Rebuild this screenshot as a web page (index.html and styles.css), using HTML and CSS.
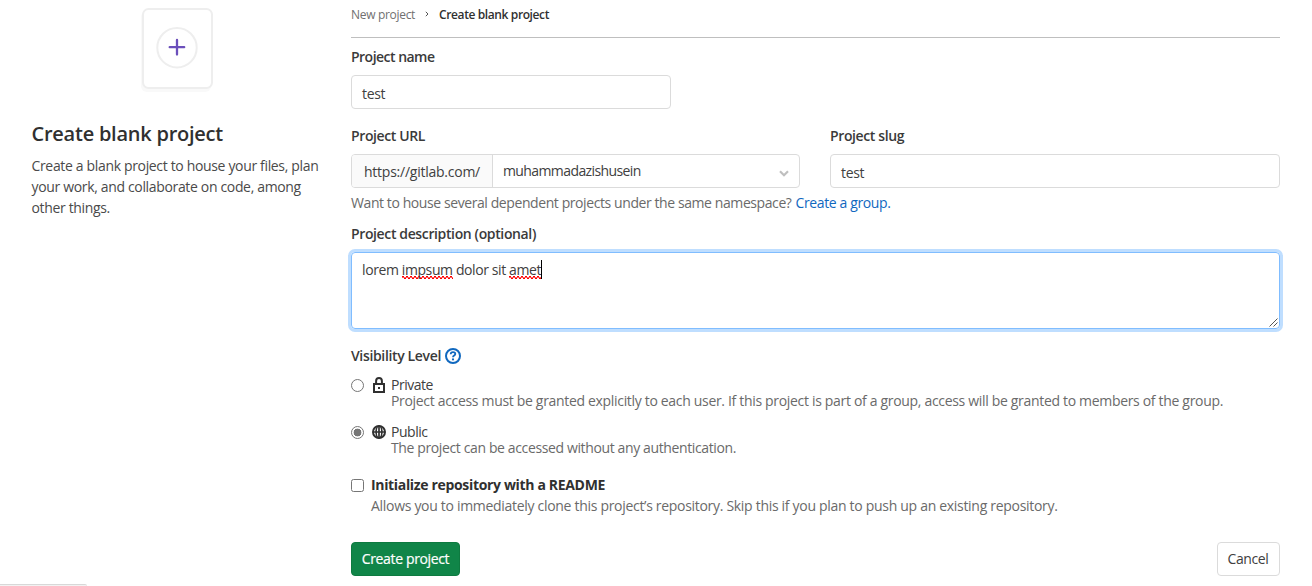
FILE: index.html
```html
<!DOCTYPE html>
<html lang="en">
<head>
<meta charset="utf-8">
<title>Create blank project</title>
<link rel="stylesheet" href="styles.css">
</head>
<body>
<div class="page">
  <aside class="intro">
    <svg class="intro-art" width="74" height="86" viewBox="0 0 74 86" fill="none">
      <rect x="0" y="4" width="70" height="81" rx="6" fill="#f9f9f9"/>
      <rect x="2" y="2" width="69" height="79" rx="5.5" fill="#fff" stroke="#eee" stroke-width="2"/>
      <circle cx="36" cy="40.7" r="19.7" stroke="#eee" stroke-width="2"/>
      <path d="M28.700 40.2h14.5M36 33v14.500" stroke="#6b4fbb" stroke-width="2.300" stroke-linecap="round"/>
    </svg>
    <h1 class="intro-title">Create blank project</h1>
    <p class="intro-text">Create a blank project to house your files, plan<br>your work, and collaborate on code, among<br>other things.</p>
  </aside>

  <main class="main">
    <nav class="crumbs">
      <span class="crumb">New project</span>
      <svg class="crumb-sep" width="4" height="6" viewBox="0 0 4 6" fill="none"><path d="M.8.8 3 3 .8 5.200" stroke="#555" stroke-width="1"/></svg>
      <span class="crumb crumb-current">Create blank project</span>
    </nav>

    <div class="label label-name">Project name</div>
    <div class="input input-name">test</div>

    <div class="columns">
      <div class="column">
        <div class="label label-url">Project URL</div>
        <div class="input-group">
          <span class="prefix">https://gitlab.com/</span>
          <span class="select"><span class="select-text">muhammadazishusein</span>
            <svg width="10" height="7" viewBox="0 0 10 7" fill="none"><path d="m1 1.200 4 4 4-4" stroke="#bfbfbf" stroke-width="2.200"/></svg>
          </span>
        </div>
      </div>
      <div class="column">
        <div class="label label-url">Project slug</div>
        <div class="input">test</div>
      </div>
    </div>
    <div class="help"><span class="help-text">Want to house several dependent projects under the same namespace?</span><a class="link">Create a group.</a></div>

    <div class="label label-desc">Project description (optional)</div>
    <div class="textarea"><span class="typed">lorem <span class="misspelt">impsum</span> dolor sit <span class="misspelt">amet</span></span><span class="caret"></span>
      <svg class="grip" width="9" height="9" viewBox="0 0 9 9" fill="none"><path d="m.5 8.500 8-8m-4 8 4-4" stroke="#555" stroke-width="1"/></svg>
    </div>

    <div class="label label-visibility">Visibility Level
      <svg width="16" height="16" viewBox="0 0 16 16" fill="none"><circle cx="8" cy="8" r="7" stroke="#1068bf" stroke-width="2"/><path d="M5.700 6.300c0-1.300 1-2.100 2.300-2.100s2.300.8 2.300 1.900c0 1.500-2.300 1.500-2.300 3.100" stroke="#1068bf" stroke-width="1.800"/><circle cx="8" cy="11.400" r="1.100" fill="#1068bf"/></svg>
    </div>

    <div class="option">
      <span class="radio"></span>
      <svg class="option-icon" width="14" height="16" viewBox="0 0 14 16" fill="none"><path d="M2 7h10v8H2zM4.100 7V3.900a2.900 2.900 0 0 1 5.800 0V7" stroke="#303030" stroke-width="2"/><rect x="6" y="10" width="2" height="2" fill="#303030"/></svg>
      <div class="option-body"><div class="option-name name-private">Private</div><div class="option-text text-private">Project access must be granted explicitly to each user. If this project is part of a group, access will be granted to members of the group.</div></div>
    </div>
    <div class="option option-public">
      <span class="radio radio-on"></span>
      <svg class="option-icon" width="14" height="16" viewBox="0 0 14 16" fill="none"><circle cx="7" cy="8" r="6" stroke="#303030" stroke-width="2"/><ellipse cx="7" cy="8" rx="2.900" ry="6" stroke="#303030" stroke-width="1.600"/><path d="M1 8h12M7 2v12" stroke="#303030" stroke-width="1.700"/></svg>
      <div class="option-body"><div class="option-name name-public">Public</div><div class="option-text text-public">The project can be accessed without any authentication.</div></div>
    </div>

    <div class="readme">
      <span class="checkbox"></span>
      <div><div class="readme-name">Initialize repository with a README</div><div class="readme-text">Allows you to immediately clone this project’s repository. Skip this if you plan to push up an existing repository.</div></div>
    </div>

    <div class="actions"><span class="button button-primary">Create project</span><span class="button button-cancel">Cancel</span></div>
  </main>
  <div class="status-edge"></div>
</div>
</body>
</html>
```
FILE: styles.css
```css
* { box-sizing: border-box; }
body {
  margin: 0;
  background: #fff;
  color: #404040;
  font: 14px/20px "Open Sans", "Noto Sans", sans-serif;
  letter-spacing: -0.34px;
}
.page {
  position: relative;
  display: flex;
  height: 586px;
  overflow: hidden;
  white-space: nowrap;
}
.intro { width: 351px; padding: 7px 0 0 31.5px; }
.intro-art { display: block; margin-left: 109.5px; }
.intro-title {
  margin: 27px 0 0;
  color: #303030;
  font-size: 20px;
  font-weight: 600;
  line-height: 28px;
  letter-spacing: -0.24px;
}
.intro-text { margin: 7px 0 0; line-height: 21px; color: #4a4a4a; }

.main { width: 929px; }
.crumbs {
  display: flex;
  align-items: center;
  height: 38px;
  padding-bottom: 7px;
  border-bottom: 1px solid #bfbfbf;
  font-size: 12px;
}
.crumb { color: #707070; letter-spacing: -0.31px; }
.crumb-sep { margin: 0 10px 2px; }
.crumb-current { color: #303030; font-weight: 600; letter-spacing: -0.39px; }

.label { font-weight: 600; letter-spacing: -0.38px; color: #3a3a3a; }
.label-name { margin-top: 9px; letter-spacing: -0.52px; }
.input {
  height: 34px;
  padding: 2px 10px 0;
  border: 1px solid #dbdbdb;
  border-radius: 4px;
  line-height: 32px;
}
.input-name { width: 320px; margin-top: 8px; }

.columns { display: grid; grid-template-columns: 449px 450px; gap: 30px; margin-top: 17px; }
.label-url { margin-bottom: 8px; }
.input-group {
  display: flex;
  height: 34px;
  border: 1px solid #dbdbdb;
  border-radius: 4px;
  line-height: 32px;
}
.prefix {
  width: 141px;
  padding: 1px 0 0 12px;
  border-right: 1px solid #dbdbdb;
  border-radius: 3px 0 0 3px;
  background: #fafafa;
  letter-spacing: -0.245px;
}
.select { display: flex; flex: 1; align-items: center; justify-content: space-between; padding: 0 10px; }
.select svg { margin-top: 5px; }
.select-text { letter-spacing: -0.6px; }
.help { display: flex; gap: 4px; margin-top: 5px; color: #6a6a6a; }
.help-text { letter-spacing: -0.413px; }
.link { color: #1068bf; letter-spacing: -0.378px; }

.label-desc { margin-top: 11px; letter-spacing: -0.37px; }
.textarea {
  position: relative;
  display: flex;
  height: 77px;
  margin-top: 8px;
  padding: 7px 10px;
  border: 1px solid #80bdff;
  border-radius: 4px;
  box-shadow: 0 0 0 3px #bfdeff;
}
.typed { letter-spacing: -0.4px; }
.misspelt {
  background-image:
    linear-gradient(90deg, #f00 2px, transparent 2px),
    linear-gradient(90deg, #ff5a5a, #ff5a5a),
    linear-gradient(90deg, transparent 2px, #f00 2px);
  background-repeat: repeat-x;
  background-size: 4px 1px;
  background-position: 0 calc(100% - 2px), 0 calc(100% - 1px), 0 100%;
}
.caret { width: 1px; height: 19px; background: #000; }
.grip { position: absolute; right: 1px; bottom: 1px; }

.label-visibility { display: flex; align-items: center; gap: 4px; margin-top: 17px; letter-spacing: -0.348px; }

.option { display: flex; margin-top: 11px; line-height: 16px; }
.option-public { margin-top: 15px; }
.radio { width: 13px; height: 13px; margin-top: 2px; border: 1px solid #767676; border-radius: 50%; }
.radio-on { background: radial-gradient(circle, #767676 3.600px, #fff 4.200px); }
.option-icon { margin: 0 5px 0 8px; }
.name-private, .name-public { letter-spacing: -0.47px; }
.option-text { color: #6a6a6a; }
.text-private { letter-spacing: -0.321px; }
.text-public { letter-spacing: -0.376px; }

.readme { display: flex; gap: 7px; margin-top: 19px; }
.checkbox { width: 13px; height: 13px; margin-top: 4px; border: 1px solid #767676; border-radius: 2.500px; }
.readme-name { color: #303030; font-weight: 700; letter-spacing: -0.334px; }
.readme-text { margin-top: 1px; color: #6a6a6a; letter-spacing: -0.303px; }

.actions { display: flex; justify-content: space-between; margin-top: 26px; }
.button { height: 34px; border: 1px solid #dbdbdb; border-radius: 4px; line-height: 32px; text-align: center; }
.button-primary { width: 109px; border-color: #0e7a40; background: #108548; color: #fff; letter-spacing: -0.356px; -webkit-text-stroke: 0.2px #fff; }
.button-cancel { width: 63px; padding-right: 1px; letter-spacing: -0.383px; }

/* Corner of the browser status bubble */
.status-edge {
  position: absolute;
  left: -1px;
  bottom: 0;
  width: 88px;
  height: 2px;
  border-top: 1px solid #d8d8d8;
  border-top-right-radius: 3px;
  background: #f2f2f2;
}
```
